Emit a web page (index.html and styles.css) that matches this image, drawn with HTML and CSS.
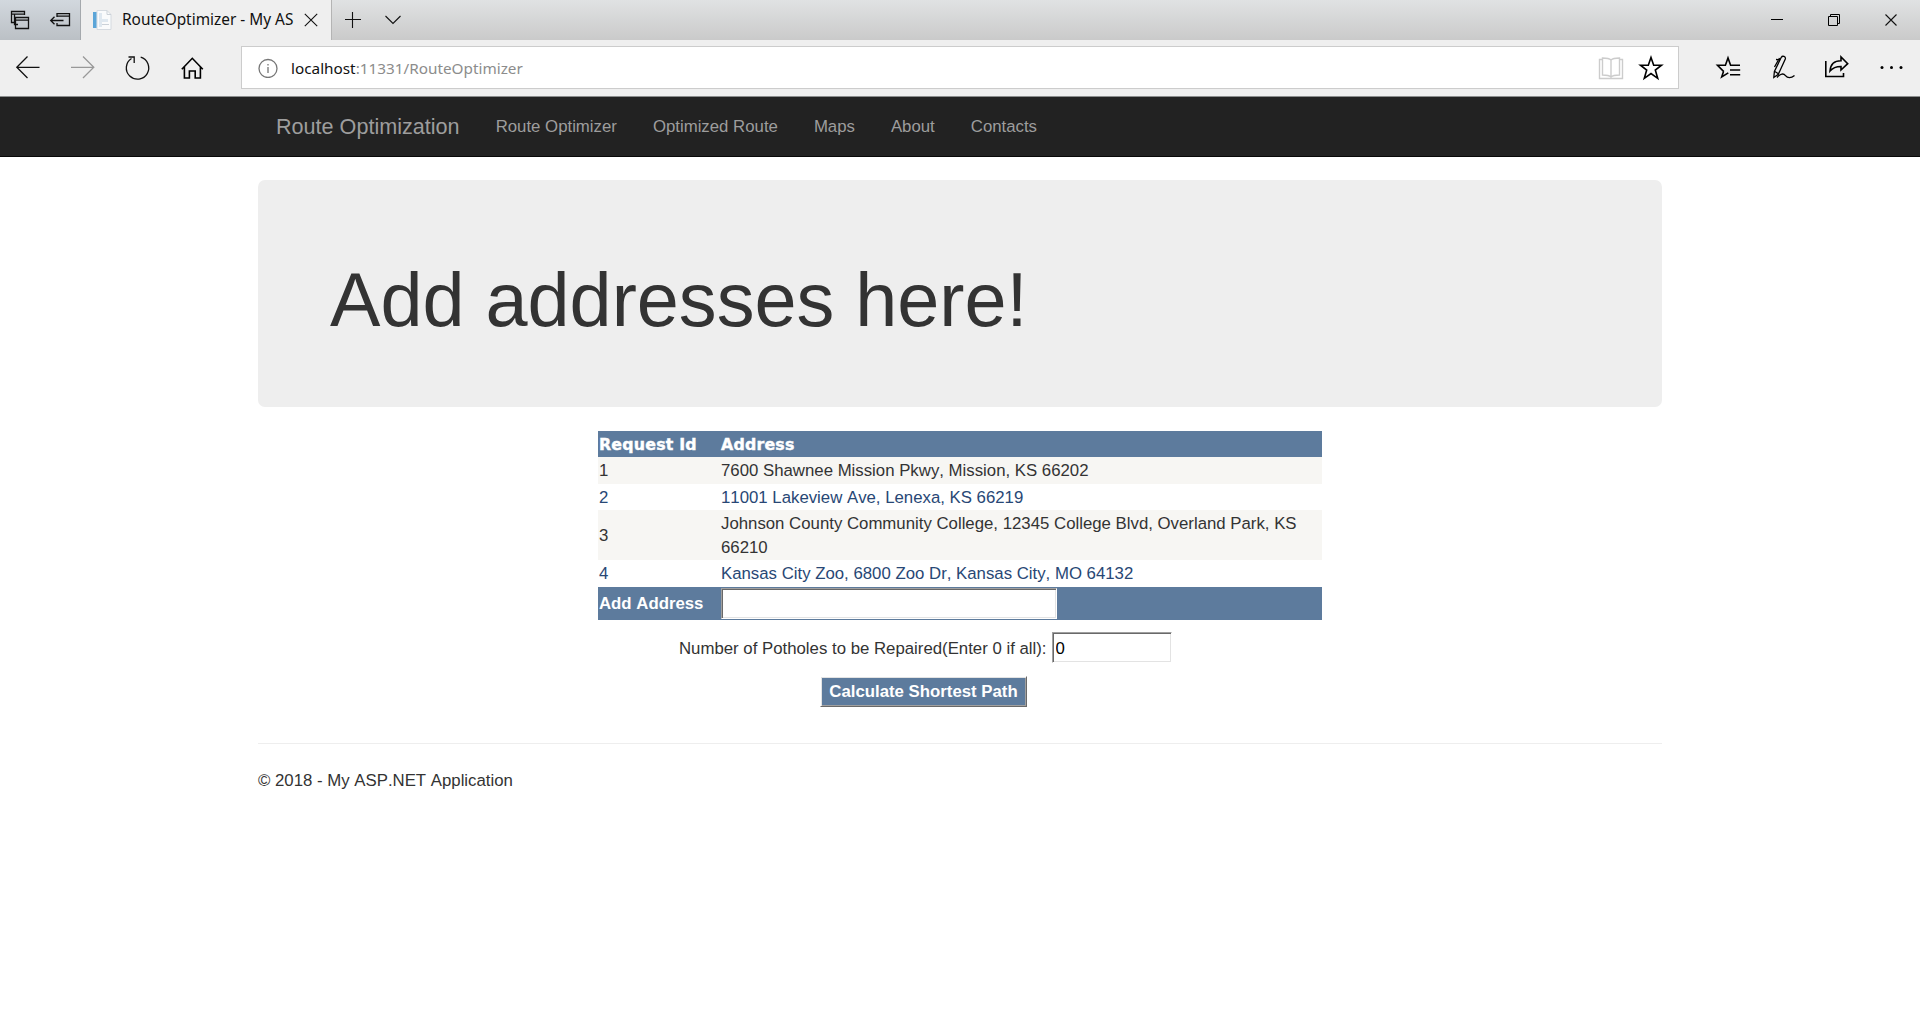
FILE: index.html
```html
<!DOCTYPE html>
<html lang="en">
<head>
<meta charset="utf-8">
<title>RouteOptimizer - My ASP.NET Application</title>
<link rel="stylesheet" href="styles.css">
</head>
<body>
<div class="titlebar">
  <div class="tab-tools">
    <svg class="icon" width="40" height="40" viewBox="0 0 40 40"><path d="M14.500 22.500H11.500V11.500H24.500V15M11.500 14.200H24.500M18 24.500H14.500V14.500M15.500 17.500H28.500V28.500H15.500ZM15.500 20.200H28.500"/></svg>
    <svg class="icon" width="40" height="40" viewBox="0 0 40 40"><path d="M17 17V13.700H29.500V25.500H17V23M17 16.200H29.500M10.500 20.500H23.500M14.500 16.700L10.700 20.500L14.500 24.300"/></svg>
  </div>
  <div class="tab">
    <svg class="favicon" width="20" height="20" viewBox="0 0 20 20"><path fill="#fafbfc" stroke="#d5dae0" d="M5 .5H15L19 4.500V19.500H5Z"/><path fill="#5ba5d8" d="M1 2H4.500V18H1Z"/><path fill="#dfe8f0" d="M7 3H10V17H7ZM10 9H16V12H10Z"/><path fill="none" stroke="#cbd1d8" d="M15 .5V4.500H19M10 14.500H17"/></svg>
    <span class="tab-title">RouteOptimizer - My AS</span>
    <svg class="icon thin" width="14" height="14" viewBox="0 0 14 14"><path d="M.8.800L13.200 13.200M13.200.800L.8 13.200"/></svg>
  </div>
  <div class="tab-actions">
    <svg class="icon thin" width="16" height="16" viewBox="0 0 16 16"><path d="M0 7.500H16M7.500 0V16"/></svg>
    <svg class="icon thin" width="16" height="10" viewBox="0 0 16 10"><path d="M.5 1L8 8.500L15.500 1"/></svg>
  </div>
  <div class="window-buttons">
    <svg class="icon crisp" width="57" height="40" viewBox="0 0 57 40"><path d="M22 19.500H34"/></svg>
    <svg class="icon crisp" width="57" height="40" viewBox="0 0 57 40"><path d="M22.500 16.500H31.500V25.500H22.500ZM24.500 16V14.500H33.500V23.500H32"/></svg>
    <svg class="icon thin" width="57" height="40" viewBox="0 0 57 40"><path d="M22.500 14.500L33.500 25.500M33.500 14.500L22.500 25.500"/></svg>
  </div>
</div>
<div class="toolbar">
  <div class="nav-buttons">
    <svg class="icon" width="55" height="56" viewBox="0 0 55 56"><path d="M39.500 27.300H16.800M27.500 16.500L16.800 27.300L27.500 38"/></svg>
    <svg class="icon faded" width="55" height="56" viewBox="0 0 55 56"><path d="M16 27.300H38.800M28 16.500L38.800 27.300L28 38"/></svg>
    <svg class="icon" width="55" height="56" viewBox="0 0 55 56"><path d="M30.700 17.200A11.200 11.200 0 1 1 21.500 18.500M18.500 17H24.200V23"/></svg>
    <svg class="icon strong" width="55" height="56" viewBox="0 0 55 56"><path d="M16.800 29.200L27.300 18.300L37.800 29.200M19.400 27V38H24.400V31H30.200V38H35.400V27"/></svg>
  </div>
  <div class="address-bar">
    <svg class="icon info" width="20" height="20" viewBox="0 0 20 20"><circle cx="10" cy="10.500" r="9"/><path d="M10 9V15M10 6V7.500"/></svg>
    <span class="url"><span class="url-host">localhost</span>:11331/RouteOptimizer</span>
    <svg class="icon book" width="26" height="24" viewBox="0 0 26 24"><path d="M4 3.500H1.500V22.500H24.500V3.500H22M13 4C11 2 8 2 4.500 2V19C8 19 11 19 13 21C15 19 18 19 21.500 19V2C18 2 15 2 13 4V21"/></svg>
    <svg class="icon strong" width="26" height="26" viewBox="0 0 26 26"><path d="M13 2.500L15.700 10.200H23.500L17.300 15L19.700 23.300L13 18.500L6.300 23.300L8.700 15L2.500 10.200H10.300Z"/></svg>
  </div>
  <div class="toolbar-actions">
    <svg class="icon strong" width="54" height="56" viewBox="0 0 54 56"><path d="M22.500 31.500L20.700 37L27.300 32.800M22.800 31.600L16.500 25.300H24.400L27 18L29.600 25.300H39M29 30H39.200M29 34.700H39.200"/></svg>
    <svg class="icon pen" width="54" height="56" viewBox="0 0 54 56"><path d="M18.800 37.500L19.400 31.500L26.300 17.300C27.500 15.300 31 16.500 30.300 19L23.300 34.300L18.800 37.500ZM25.500 20L21 19.500M19.500 31.300L23 33.500M24.500 18L19.500 27M22 37.500C25.500 33.500 28.500 33 30.500 35.700C32.500 38.300 36 38.500 39.500 35.500"/></svg>
    <svg class="icon strong" width="54" height="56" viewBox="0 0 54 56"><path d="M16.800 21V36.500H34.500V33M21 31C21.500 24 25.500 20.800 32 20.800V17L38.700 23.700L32 30V26.500C27 26.500 24 27.500 21 31Z"/></svg>
    <svg class="icon dots" width="54" height="56" viewBox="0 0 54 56"><circle cx="19" cy="27.500" r="1.500"/><circle cx="28.500" cy="27.500" r="1.500"/><circle cx="38" cy="27.500" r="1.500"/></svg>
  </div>
</div>
<nav class="navbar">
  <div class="navbar-inner">
    <a class="brand">Route Optimization</a>
    <a>Route Optimizer</a>
    <a>Optimized Route</a>
    <a>Maps</a>
    <a>About</a>
    <a>Contacts</a>
  </div>
</nav>
<main class="container">
  <div class="jumbotron"><h1>Add addresses here!</h1></div>
  <table class="grid">
    <thead><tr><th class="col-id">Request Id</th><th>Address</th></tr></thead>
    <tbody>
      <tr class="odd"><td>1</td><td>7600 Shawnee Mission Pkwy, Mission, KS 66202</td></tr>
      <tr class="even"><td>2</td><td>11001 Lakeview Ave, Lenexa, KS 66219</td></tr>
      <tr class="odd tall"><td>3</td><td>Johnson County Community College, 12345 College Blvd, Overland Park, KS 66210</td></tr>
      <tr class="even last"><td>4</td><td>Kansas City Zoo, 6800 Zoo Dr, Kansas City, MO 64132</td></tr>
    </tbody>
    <tfoot><tr><td>Add Address</td><td><input class="field field-address" type="text" aria-label="Address"></td></tr></tfoot>
  </table>
  <div class="potholes">
    <label for="count">Number of Potholes to be Repaired(Enter 0 if all):</label>
    <input class="field field-count" id="count" type="text" value="0">
  </div>
  <div class="submit-row"><button class="submit" type="button">Calculate Shortest Path</button></div>
  <hr class="rule">
  <footer>© 2018 - My ASP.NET Application</footer>
</main>
</body>
</html>
```
FILE: styles.css
```css
* { box-sizing: border-box; }
body {
  margin: 0;
  background: #fff;
  color: #333;
  font: 16.8px/24px "Liberation Sans", Arial, sans-serif;
  font-kerning: none;
  overflow: hidden;
}
svg { display: block; flex: none; }
.icon { fill: none; stroke: #111; stroke-width: 1.3; }
.icon.thin { stroke-width: 1.1; }
.icon.crisp { stroke: #000; stroke-width: 1; }
.icon.strong { stroke: #000; stroke-width: 1.6; }
.icon.pen { stroke: #000; stroke-width: 1.3; }
.icon.faded { stroke: #999; }
.icon.info { stroke: #767676; }
.icon.book { stroke: #ccc; stroke-width: 1.4; }
.icon.dots { fill: #000; stroke: none; }

.titlebar {
  display: flex;
  height: 40px;
  background: linear-gradient(#e0e2e3, #cacaca);
  font-family: "Noto Sans", "Open Sans", sans-serif;
}
.tab-tools {
  display: flex;
  width: 81px;
  background: linear-gradient(#d2d8de, #bbc0c5);
  border-right: 1px solid #a5a9ad;
}
.tab {
  display: flex;
  align-items: center;
  width: 251px;
  padding-left: 11px;
  background: #efefef;
  border-right: 1px solid #b4b4b4;
}
.tab-title {
  width: 169px;
  margin: 0 13px 0 10px;
  white-space: nowrap;
  color: #111;
  font-size: 15.4px;
}
.tab-actions {
  display: flex;
  align-items: center;
  gap: 24px;
  padding-left: 13px;
}
.window-buttons { display: flex; margin-left: auto; }

.toolbar {
  display: flex;
  height: 57px;
  background: #efefef;
  border-bottom: 1px solid #8b8d8d;
}
.nav-buttons { display: flex; width: 241px; }
.address-bar {
  display: flex;
  align-items: center;
  width: 1438px;
  height: 43px;
  margin-top: 6px;
  padding: 0 14px 0 16px;
  background: #fff;
  border: 1px solid #ccc;
}
.url {
  margin-left: 13px;
  margin-right: auto;
  padding-top: 0;
  color: #8c8c8c;
  font: 15.3px/24px "Noto Sans", "Open Sans", sans-serif;
}
.url-host { color: #111; }
.book { margin-right: 14px; }
.toolbar-actions { display: flex; margin-left: 22px; }

.navbar {
  height: 60px;
  background: #222;
  border-bottom: 1px solid #080808;
}
.navbar-inner {
  display: flex;
  width: 1404px;
  margin: 0 auto;
}
.navbar a { padding: 18px 18px; color: #9d9d9d; }
.navbar .brand { font-size: 21.6px; }

.container { width: 1404px; margin: 0 auto; }
.jumbotron {
  height: 227px;
  margin: 23px 0 24px;
  padding: 82.6px 72px 0;
  background: #eee;
  border-radius: 7px;
}
h1 { margin: 0; font-size: 75.6px; font-weight: 400; line-height: 1; }

.grid {
  width: 724px;
  margin: 0 auto;
  border-collapse: collapse;
  table-layout: fixed;
}
.grid td, .grid th { padding: 0 1px; text-align: left; }
.grid tr { height: 26px; }
.grid .col-id { width: 122px; }
.grid th {
  padding: 2px 1px 0;
  background: #5d7b9d;
  color: #fff;
  font: 700 15.8px/24px "DejaVu Sans", "Liberation Sans", sans-serif;
  letter-spacing: .2px;
  -webkit-text-stroke: .4px #fff;
}
.grid .odd { background: #f7f6f3; }
.grid .even { color: #284775; }
.grid tbody tr:first-child, .grid .last { height: 27px; }
.grid tbody tr:nth-child(2) td, .grid .tall td { padding-top: 2px; }
.grid .tall { height: 50px; }
.grid tfoot tr { height: 33px; background: #5d7b9d; color: #fff; font-weight: 700; }
.field {
  display: block;
  height: 31px;
  padding: 2px 3px 0;
  background: #fff;
  border: 1px solid;
  border-color: #a0a0a0 #fff #fff #a0a0a0;
  border-radius: 0;
  box-shadow: inset 1px 1px #696969, inset -1px -1px #e3e3e3;
  color: #000;
  font: 16.8px/24px "Liberation Sans", Arial, sans-serif;
}
.field-address { width: 336px; }
.field-count { width: 120px; }
.potholes {
  display: flex;
  align-items: center;
  gap: 5px;
  margin: 12px 0 13px 421px;
}
.potholes label { padding-top: 2px; }
.submit-row { display: flex; padding-left: 562px; }
.submit {
  width: 207px;
  height: 31px;
  padding: 0;
  background: #5d7b9d;
  border: 1px solid;
  border-color: #fff #696969 #696969 #fff;
  border-radius: 0;
  box-shadow: inset 1px 1px #e3e3e3, inset -1px -1px #a0a0a0;
  color: #fff;
  font: 700 16.8px/22px "Liberation Sans", Arial, sans-serif;
}
.rule { height: 1px; margin: 36px 0 25px; border: 0; background: #eee; }
```
